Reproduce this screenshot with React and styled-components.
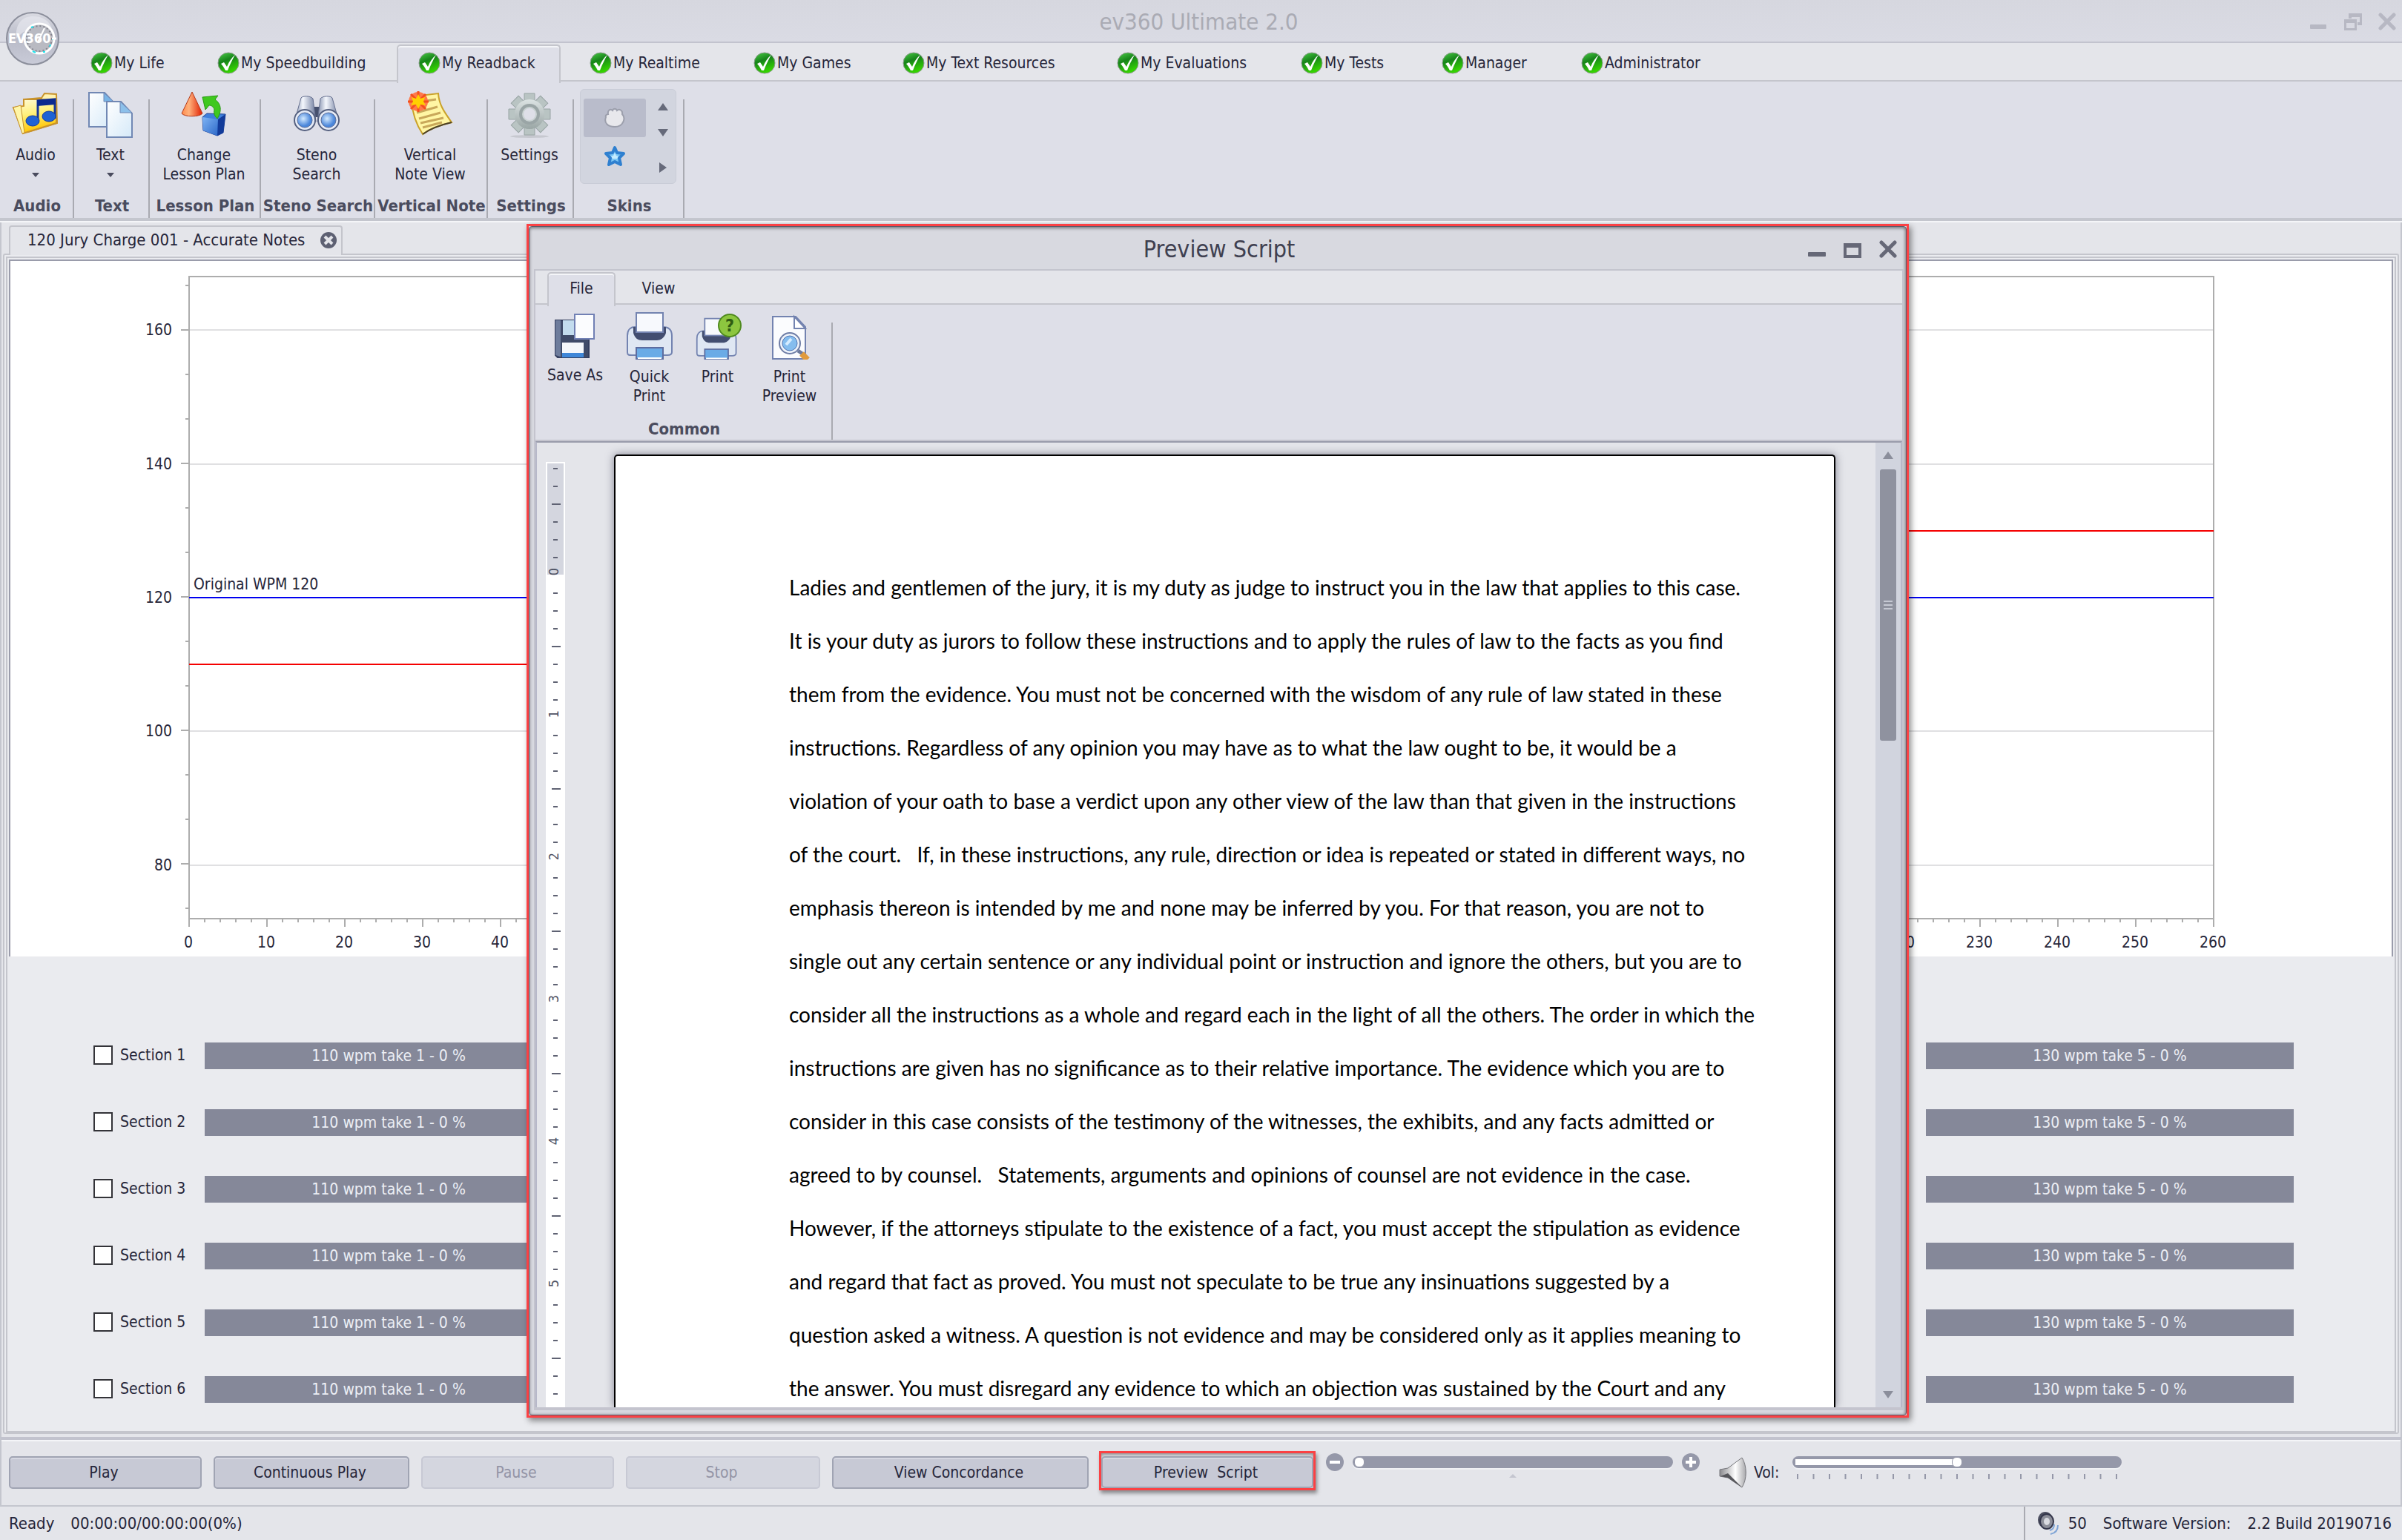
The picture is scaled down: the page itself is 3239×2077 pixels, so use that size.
import React, { useState } from "react";
import styled, { createGlobalStyle, css } from "styled-components";

const GlobalStyle = createGlobalStyle`
  * {
    box-sizing: border-box;
  }

  body {
    margin: 0;
    background: #e4e5ea;
    color: #26263a;
    font-family: 'DejaVu Sans Condensed', 'DejaVu Sans', sans-serif;
    font-size: 21px;
    line-height: 26px;
  }

  button, input {
    font: inherit;
    color: inherit;
    margin: 0;
  }

  svg {
    display: block;
    flex: none;
  }
`;

/* ---------- window shell ---------- */

const Window = styled.div`
  position: relative;
  display: flex;
  flex-direction: column;
  min-height: 100vh;
  overflow: hidden;
`;

const TitleBar = styled.header`
  position: relative;
  display: flex;
  align-items: center;
  justify-content: flex-end;
  height: 58px;
  padding: 2px 8px 0 0;
  background: linear-gradient(#d6d7df, #dadbe4);
  border-bottom: 2px solid #c2c3ce;
`;

const WindowTitle = styled.h1`
  flex: 1;
  margin: 0;
  padding-left: 118px;
  text-align: center;
  font-size: 31px;
  line-height: 40px;
  font-weight: normal;
  color: #aaabb4;
`;

const WindowButtons = styled.div`
  display: flex;
  gap: ${({ $gap }) => $gap || 24}px;
  color: ${({ $muted }) => ($muted ? "#b7b8c3" : "#666877")};
`;

const BareButton = styled.button`
  display: flex;
  padding: 0;
  border: 0;
  background: none;
`;

const Orb = styled.div`
  position: absolute;
  left: 6px;
  top: 14px;
  z-index: 2;
`;

/* ---------- ribbon ---------- */

const TabStrip = styled.nav`
  display: flex;
  gap: ${({ $gap }) => $gap}px;
  height: ${({ $height }) => $height}px;
  padding-left: ${({ $start }) => $start}px;
  background: #e4e5ea;
  border-bottom: 2px solid #c4c5cc;
  box-shadow: 0 2px 0 #f4f5f8;
`;

const RibbonTab = styled.button`
  display: flex;
  align-items: center;
  justify-content: ${({ $center }) => ($center ? "center" : "flex-start")};
  gap: 2px;
  width: ${({ $width }) => $width}px;
  margin: 2px 0 -4px;
  padding: ${({ $center }) => ($center ? "0 0 4px" : "0 0 4px 27px")};
  border: 2px solid transparent;
  border-bottom: 0;
  background: none;
  white-space: nowrap;

  ${({ $active }) => $active && css`
    position: relative;
    background: #dedfe8;
    border-color: #c4c5cc;
    border-radius: 5px 5px 0 0;
    box-shadow: inset 0 2px 0 #f4f5f8;
  `}
`;

const Ribbon = styled.div`
  display: flex;
  height: ${({ $height }) => $height}px;
  padding-top: 2px;
  background: #dedfe8;
`;

const Group = styled.section`
  display: flex;
  flex-direction: column;
  align-items: center;
  width: ${({ $width }) => $width}px;
  padding-top: ${({ $top }) => $top || 8}px;
  background: linear-gradient(#a9aab1, #a9aab1) right bottom / 2px calc(100% - 22px) no-repeat;
`;

const GroupTools = styled.div`
  display: flex;
  justify-content: center;
  flex: 1;
  align-self: stretch;
  padding-right: 4px;
`;

const GroupLabel = styled.h2`
  margin: 0;
  padding-bottom: 2px;
  font-size: 22px;
  line-height: 28px;
  font-weight: bold;
  color: #4a4c5e;
  white-space: nowrap;
`;

const Tool = styled.button`
  display: flex;
  flex-direction: column;
  align-items: center;
  justify-content: flex-start;
  gap: 10px;
  width: ${({ $width }) => ($width ? `${$width}px` : "auto")};
  padding: 0;
  border: 0;
  background: none;
  text-align: center;
  white-space: pre-line;
`;

const Caret = styled.span`
  width: 0;
  height: 0;
  margin-top: 1px;
  border: 5px solid transparent;
  border-top: 6px solid #4a4c5e;
  border-bottom: 0;
`;

const SkinBox = styled.div`
  display: grid;
  grid-template-columns: 84px 1fr;
  width: 130px;
  height: 128px;
  padding: 12px 4px 10px;
  background: #d2d5df;
  border: 1px solid #c9ccd7;
  border-radius: 6px;
`;

const SkinList = styled.div`
  display: flex;
  flex-direction: column;
`;

const SkinButton = styled.button`
  display: flex;
  align-items: center;
  justify-content: center;
  height: 52px;
  padding: 0;
  border: 0;
  border-radius: 3px;
  background: ${({ $active }) => ($active ? "#b9bccb" : "none")};
`;

const SkinArrows = styled.div`
  display: flex;
  flex-direction: column;
  align-items: center;
  gap: 25px;
  padding: 6px 0 4px 10px;

  span:last-child {
    margin-top: auto;
  }
`;

const Rule = styled.div`
  height: 6px;
  background: #c4c6ce;
  border-bottom: 2px solid #f4f5f8;
`;

/* ---------- document area ---------- */

const DocumentArea = styled.main`
  flex: 1;
  display: flex;
  flex-direction: column;
  padding: 4px 2px;
  border: 2px solid #c4c6ce;
  border-top: 0;
  border-bottom: 0;
`;

const DocumentTab = styled.div`
  position: relative;
  z-index: 1;
  display: flex;
  align-items: center;
  justify-content: space-between;
  align-self: flex-start;
  width: 450px;
  height: 40px;
  margin: 0 0 -2px 8px;
  padding: 0 6px 2px 23px;
  background: #e4e5ea;
  border: 2px solid #c4c5cc;
  border-bottom: 0;
  border-radius: 4px 4px 0 0;
  font-size: 22px;
  white-space: nowrap;
`;

const Panel = styled.div`
  flex: 1;
  padding: 2px 2px 0;
  background: #eaebef;
  border: 6px double #c4c5cc;
  border-bottom: 4px solid #c4c5cc;
  border-radius: 3px;
`;

const ChartBox = styled.div`
  background: #fff;
  border: 2px solid #9a9cab;
  border-bottom: 0;
`;

const ChartSvg = styled.svg`
  width: 100%;
  height: auto;

  text {
    font-size: 21px;
    fill: #26263a;
  }
`;

const Sections = styled.div`
  display: flex;
  flex-direction: column;
  gap: 54px;
  padding: 116px 134px 38px 114px;
`;

const SectionRow = styled.div`
  display: grid;
  grid-template-columns: 66px repeat(5, 1fr);
  column-gap: 84px;
  align-items: center;
  height: 36px;
`;

const SectionLabel = styled.label`
  display: flex;
  align-items: center;
  gap: 10px;
  height: 30px;
  margin-bottom: 2px;
  white-space: nowrap;
`;

const CheckBox = styled.input`
  appearance: none;
  flex: none;
  width: 26px;
  height: 26px;
  background: #fff;
  border: 2px solid #333338;
`;

const TakeBar = styled.div`
  height: 36px;
  padding-top: 1px;
  background: #858899;
  color: #eceef4;
  line-height: 34px;
  text-align: center;
`;

/* ---------- player bar ---------- */

const PlayerBar = styled.footer`
  display: flex;
  align-items: flex-start;
  height: 94px;
  padding: 20px 10px 0;
  border: 2px solid #c4c6ce;
  border-top: 4px solid #c2c3ce;
  box-shadow: inset 0 2px 0 #f4f5f8;
`;

const PlayerButton = styled.button`
  width: ${({ $width }) => $width}px;
  height: 44px;
  margin: 2px 16px 0 0;
  padding: 0 4px 0 0;
  background: #c7c9d5;
  border: 2px solid #a0a4b3;
  border-radius: 5px;
  box-shadow: inset 0 2px 0 #d6d8e2;
  white-space: pre;

  &:disabled {
    color: #9394a6;
    background: #d4d6df;
    border-color: #c7c9d4;
  }
`;

const RedOutline = styled.div`
  margin: -5px 14px 0 -2px;
  padding: 4px 0 0;
  height: 53px;
  border: 3px solid #fb4144;
  box-shadow: 2px 4px 5px rgba(0, 0, 0, 0.4), inset 0 2px 4px rgba(0, 0, 0, 0.4);

  ${PlayerButton} {
    display: block;
    height: 43px;
    margin: 0;
  }
`;

const SliderGroup = styled.div`
  display: flex;
  flex-direction: column;
  gap: 6px;
`;

const SliderRow = styled.div`
  display: flex;
  align-items: center;
  gap: 12px;
  height: 20px;
`;

const Slider = styled.input`
  appearance: none;
  width: ${({ $width }) => $width}px;
  height: 16px;
  padding: 0 2px;
  border-radius: 8px;
  background: ${({ $filled, value, max }) =>
    $filled
      ? `linear-gradient(#fff, #fff) 4px 4px / ${(value / max) * 96}% 8px no-repeat, #9598a9`
      : "#9598a9"};
  box-shadow: 0 2px 0 #f0f1f5;

  &::-webkit-slider-thumb {
    appearance: none;
    width: 14px;
    height: 14px;
    background: #fff;
    border: 1px solid #9598a9;
    border-radius: 6px;
  }
`;

const TempoMark = styled.span`
  align-self: center;
  width: 0;
  height: 0;
  border: 5px solid transparent;
  border-top: 0;
  border-bottom: 5px solid #c4c6d0;
`;

const VolumeLabel = styled.label`
  display: flex;
  align-items: center;
  gap: 9px;
  height: 44px;
  margin: 2px 18px 0 26px;
`;

const StatusBar = styled.div`
  display: flex;
  align-items: center;
  height: 45px;
  padding-left: 12px;
  gap: 22px;
  font-size: 22px;
  white-space: nowrap;
`;

const StatusInfo = styled.div`
  display: flex;
  align-items: center;
  gap: 22px;
  height: 45px;
  margin-left: auto;
  padding: 0 14px 0 16px;
  border-left: 2px solid #a9aab1;
`;

const Voice = styled.span`
  display: flex;
  align-items: center;
  gap: 12px;
`;

/* ---------- preview dialog ---------- */

const Dialog = styled.div`
  position: absolute;
  left: 710px;
  right: 665px;
  top: 302px;
  bottom: 165px;
  z-index: 5;
  display: flex;
  border: 3px solid #fb4144;
  background: #d8d9e0;
  box-shadow: 3px 4px 8px rgba(0, 0, 0, 0.45);
`;

const DialogFrame = styled.div`
  flex: 1;
  min-width: 0;
  display: flex;
  flex-direction: column;
  padding: 0 3px 6px 6px;
  border: 1px solid #5a5c6a;
  border-radius: 4px;
  box-shadow: inset 0 2px 4px rgba(0, 0, 0, 0.35), inset -1px 0 4px rgba(0, 0, 0, 0.25);
`;

const DialogTitle = styled.header`
  display: flex;
  align-items: center;
  height: 57px;
  padding: 2px 9px 0 0;
`;

const DialogHeading = styled.h2`
  flex: 1;
  margin: 0;
  padding-left: 130px;
  text-align: center;
  font-size: 32px;
  line-height: 40px;
  font-weight: normal;
  color: #3f4050;
`;

const DialogBody = styled.div`
  flex: 1;
  min-height: 0;
  display: flex;
  flex-direction: column;
  border: 2px solid #c4c4ce;
  border-bottom-width: 4px;
`;

const Editor = styled.div`
  flex: 1;
  min-height: 0;
  display: flex;
  overflow: hidden;
  background: #e4e5ea;
  border: 2px solid #b7b8c9;
  border-top: 2px solid #9a9cab;
  border-bottom: 0;
  padding-left: 12px;
  box-shadow: 0 -2px 0 #c4c4ce;
`;

const RulerBox = styled.div`
  flex: none;
  width: 26px;
  margin-top: 26px;
  background: #fff;

  svg {
    overflow: visible;
  }

  text {
    font-size: 18px;
    fill: #4f5264;
  }
`;

const Page = styled.article`
  flex: 1;
  min-width: 0;
  margin: 16px 54px 0 66px;
  padding: 141px 0 0 234px;
  background: #fff;
  border: 2px solid #000;
  border-bottom: 0;
  border-radius: 5px 5px 0 0;
  box-shadow: 0 0 12px rgba(60, 60, 80, 0.6);
  color: #000;
  font-family: Lato, sans-serif;
  font-size: 28px;
  line-height: 72px;
`;

const Line = styled.p`
  margin: 0;
  white-space: pre;
`;

const ScrollTrack = styled.div`
  flex: none;
  display: flex;
  flex-direction: column;
  align-items: center;
  width: 34px;
  padding: 12px 0;
  background: #d1d4de;
`;

const ScrollThumb = styled.div`
  display: flex;
  flex-direction: column;
  justify-content: center;
  align-items: center;
  gap: 3px;
  width: 22px;
  height: 366px;
  margin: 14px 0 auto;
  border-radius: 3px;
  background: #8f929f;
`;

const Grip = styled.span`
  width: 12px;
  height: 2px;
  background: #c5c8d3;
`;

const Arrow = styled.span`
  width: 0;
  height: 0;
  color: ${({ $soft }) => ($soft ? "#8b8e9b" : "#666a7a")};
  border: 7px solid transparent;
  ${({ $dir }) => $dir === "up" && "border-top: 0; border-bottom: 10px solid;"}
  ${({ $dir }) => $dir === "down" && "border-bottom: 0; border-top: 10px solid;"}
  ${({ $dir }) => $dir === "right" && "border-right: 0; border-left: 10px solid;"}
`;

/* ---------- icons ---------- */

const LogoIcon = () => (
  <svg width="76" height="76" viewBox="0 0 76 76">
    <defs>
      <linearGradient id="orb" x1="0" y1="0" x2="0" y2="1">
        <stop offset="0" stopColor="#d9dae2" />
        <stop offset="0.5" stopColor="#b9bbc8" />
        <stop offset="1" stopColor="#c9cbd8" />
      </linearGradient>
    </defs>
    <circle cx="38" cy="38" r="35" fill="url(#orb)" stroke="#8b8e9b" strokeWidth="2" />
    <path d="M16 38 C14 16 26 8 38 8 C52 8 60 14 64 24 C50 18 30 22 16 38Z" fill="#e6e7ee" opacity="0.7" />
    <circle cx="47" cy="38" r="20" fill="#b9bac2" stroke="#fff" strokeWidth="3" />
    <circle cx="47" cy="38" r="17" fill="none" stroke="#85868f" strokeWidth="2" strokeDasharray="2 3" />
    <path d="M36 23l3-1M65 37v3M62 46l-1 3M38 55l4 2M52 56h3" stroke="#1fe3ee" strokeWidth="2" />
    <path d="M45 43 L54 24" stroke="#fff" strokeWidth="2" />
    <text x="5" y="44" fontSize="18" fontWeight="bold" fill="#fff">EV360</text>
    <path d="M64 38h6" stroke="#fff" strokeWidth="3" />
  </svg>
);

const CheckIcon = () => (
  <svg width="30" height="32" viewBox="0 0 30 32">
    <defs>
      <linearGradient id="tick" x1="0" y1="0" x2="0.4" y2="1">
        <stop offset="0" stopColor="#4cd048" />
        <stop offset="0.45" stopColor="#17841a" />
        <stop offset="1" stopColor="#35d400" />
      </linearGradient>
    </defs>
    <circle cx="15" cy="16" r="14" fill="url(#tick)" stroke="#8a9a8a" strokeWidth="1" />
    <path d="M5 17 L9 15 L13 21 C16 14 19 9 24 5 C20 12 17 18 14 26 L11 26 C9 22 7 19 5 17Z" fill="#fff" />
  </svg>
);

const AudioIcon = () => (
  <svg width="64" height="64" viewBox="0 0 64 64">
    <defs>
      <linearGradient id="folder" x1="0" y1="0" x2="0.3" y2="1">
        <stop offset="0" stopColor="#fffbe0" />
        <stop offset="0.5" stopColor="#fff07a" />
        <stop offset="1" stopColor="#ffc400" />
      </linearGradient>
    </defs>
    <path d="M16 12 L40 10 L44 4 L60 5 L61 44 L22 56Z" fill="#fff3b0" stroke="#c8932c" strokeWidth="2" />
    <path d="M2 23 L16 21 V12 L40 12 L60 14 L60 44 L15 58Z" fill="url(#folder)" stroke="#c8932c" strokeWidth="2" />
    <path d="M2 23 L12 20 L17 57 L14 58Z" fill="#fff6a8" stroke="#c8932c" strokeWidth="1" />
    <path d="M35 44 V14 L58 12 V38" fill="none" stroke="#15379c" strokeWidth="3" />
    <path d="M34 13 L59 11 V19 L34 21Z" fill="#0b2a8f" />
    <ellipse cx="28" cy="41" rx="9" ry="7" fill="#1f62d4" stroke="#123a9e" strokeWidth="1" />
    <ellipse cx="50" cy="35" rx="9" ry="7" fill="#1f62d4" stroke="#123a9e" strokeWidth="1" />
  </svg>
);

const TextIcon = () => (
  <svg width="64" height="64" viewBox="0 0 64 64">
    <defs>
      <linearGradient id="sheet" x1="0" y1="0" x2="1" y2="1">
        <stop offset="0" stopColor="#fff" />
        <stop offset="1" stopColor="#d5e9f8" />
      </linearGradient>
    </defs>
    <path d="M3 3 H24 L36 16 V49 H3Z" fill="url(#sheet)" stroke="#7188b4" strokeWidth="2" />
    <path d="M23 3 V15 H36Z" fill="#79b4e6" stroke="#7188b4" strokeWidth="1" />
    <path d="M27 15 H46 L61 31 V63 H27Z" fill="url(#sheet)" stroke="#7188b4" strokeWidth="2" />
    <path d="M45 15 V30 H61Z" fill="#8cc0ea" stroke="#7188b4" strokeWidth="1" />
  </svg>
);

const ChangeIcon = () => (
  <svg width="64" height="64" viewBox="0 0 64 64">
    <defs>
      <linearGradient id="cone">
        <stop offset="0" stopColor="#ff8a4a" />
        <stop offset="0.35" stopColor="#ffb27c" />
        <stop offset="1" stopColor="#e01c00" />
      </linearGradient>
      <linearGradient id="cubeface" x1="0" y1="0" x2="1" y2="1">
        <stop offset="0" stopColor="#7fb4f4" />
        <stop offset="1" stopColor="#2c68c8" />
      </linearGradient>
    </defs>
    <path d="M16 2 L30 31 C26 36 6 36 2 31Z" fill="url(#cone)" stroke="#b33a1c" strokeWidth="1" />
    <path d="M30 36 L36 31 L61 32 L58 57 L50 61 L31 54Z" fill="#3f7fdc" stroke="#1c3f93" strokeWidth="1" />
    <path d="M30 36 L51 39 L50 61 L31 54Z" fill="url(#cubeface)" />
    <path d="M51 39 L61 32 L58 57 L50 61Z" fill="#123b9a" />
    <path d="M30 9 L51 7 L47 12 C56 19 56 28 50 38 C46 34 45 31 46 26 C45 22 42 20 39 20 L34 26Z" fill="#3fc81f" stroke="#279a12" strokeWidth="1" />
  </svg>
);

const BinocularsIcon = () => (
  <svg width="64" height="64" viewBox="0 0 64 64">
    <defs>
      <linearGradient id="barrel">
        <stop offset="0" stopColor="#7c89a8" />
        <stop offset="0.4" stopColor="#f4f7fd" />
        <stop offset="1" stopColor="#6d7a9c" />
      </linearGradient>
      <radialGradient id="lens" cx="0.4" cy="0.4">
        <stop offset="0" stopColor="#d3eaff" />
        <stop offset="1" stopColor="#4a86da" />
      </radialGradient>
    </defs>
    <rect x="26" y="22" width="12" height="14" fill="#46506e" />
    <path d="M11 10 C13 7 24 7 27 11 L31 42 H2Z" fill="url(#barrel)" stroke="#66708f" strokeWidth="1" />
    <path d="M53 10 C51 7 40 7 37 11 L33 42 H62Z" fill="url(#barrel)" stroke="#66708f" strokeWidth="1" />
    <circle cx="16" cy="40" r="14" fill="#e6ecf7" stroke="#55607f" strokeWidth="2" />
    <circle cx="48" cy="40" r="14" fill="#e6ecf7" stroke="#55607f" strokeWidth="2" />
    <circle cx="16" cy="40" r="10" fill="url(#lens)" stroke="#5a6c98" strokeWidth="1" />
    <circle cx="48" cy="40" r="10" fill="url(#lens)" stroke="#5a6c98" strokeWidth="1" />
  </svg>
);

const NoteIcon = () => (
  <svg width="64" height="64" viewBox="0 0 64 64">
    <path d="M10 8 L43 4 C44 20 52 30 61 43 C48 46 34 50 22 59 C12 44 8 30 7 14Z" fill="#fff6a4" stroke="#caa22a" strokeWidth="2" />
    <path d="M61 43 C48 46 34 50 22 59" fill="none" stroke="#4b4028" strokeWidth="2" />
    <path d="M20 15 L40 12 M14 30 L42 22 M17 38 L46 30 M19 44 L50 37 M22 50 L48 43" stroke="#c9a85a" strokeWidth="3" />
    <circle cx="16" cy="15" r="13" fill="#ff7a4a" />
    <path d="M16 1v28M2 15h28M6 5l20 20M26 5L6 25" stroke="#f4501e" strokeWidth="3" />
    <path d="M16 5l3 6 6-2-2 6 3 5-7-1-3 6-3-6-7 1 3-5-2-6 6 2Z" fill="#ffd000" />
  </svg>
);

const GearIcon = () => (
  <svg width="64" height="64" viewBox="0 0 64 64">
    <defs>
      <linearGradient id="gear" x1="0" y1="0" x2="0" y2="1">
        <stop offset="0" stopColor="#dce3e3" />
        <stop offset="1" stopColor="#9aa6a5" />
      </linearGradient>
    </defs>
    <ellipse cx="32" cy="62" rx="26" ry="2" fill="#c6c8cf" />
    <g fill="#b9c4c3" stroke="#98a4a4" strokeWidth="1">
      {[0, 45, 90, 135, 180, 225, 270, 315].map((angle) => (
        <path key={angle} d="M25 16 V4 H39 V16Z" transform={`rotate(${angle} 32 32)`} />
      ))}
    </g>
    <circle cx="32" cy="32" r="20" fill="url(#gear)" />
    <circle cx="32" cy="32" r="14" fill="#9aa5a6" />
    <circle cx="32" cy="32" r="9" fill="#dedfe8" stroke="#c9d2d2" strokeWidth="2" />
  </svg>
);

const BlobIcon = () => (
  <svg width="30" height="30" viewBox="0 0 30 30">
    <path d="M6 10 C5 5 9 2 12 5 C13 2 17 2 18 5 C21 2 26 5 25 10 C30 15 27 27 15 27 C6 27 0 22 3 14 C2 12 4 10 6 10Z" fill="#e8e8ec" stroke="#9c9fac" strokeWidth="2" />
  </svg>
);

const StarIcon = () => (
  <svg width="30" height="30" viewBox="0 0 30 30">
    <path d="M15 3 L18 10 L27 11 L21 17 L23 26 L15 22 L7 26 L9 17 L3 11 L12 10Z" fill="#7cc6f5" stroke="#2f80d0" strokeWidth="4" strokeLinejoin="round" />
    <path d="M15 10 L17 14 L20 15 L18 18 L15 18 L12 18 L10 15 L13 14Z" fill="#c4ecff" />
  </svg>
);

const SaveIcon = () => (
  <svg width="64" height="64" viewBox="0 0 64 64">
    <path d="M5 13 H50 V64 H9 L5 60Z" fill="#3f4b69" stroke="#333e5e" strokeWidth="2" />
    <path d="M5 13 H12 V62 L5 60Z" fill="#6d7c9c" />
    <rect x="15" y="13" width="20" height="20" fill="#c3dcee" />
    <rect x="14" y="43" width="29" height="14" fill="#f4f7fb" />
    <rect x="14" y="57" width="29" height="6" fill="#3f87d8" />
    <rect x="31" y="5" width="26" height="33" fill="#fbfcfe" stroke="#7180b4" strokeWidth="2" />
  </svg>
);

const PrinterBody = () => (
  <>
    <path d="M2 34 C2 24 8 22 12 22 H50 C56 22 62 24 62 34 V56 C62 60 58 60 56 60 H8 C4 60 2 60 2 56Z" fill="#dfe7f3" stroke="#7383b0" strokeWidth="2" />
    <path d="M10 22 H54 V30 C52 37 46 40 42 40 H22 C16 40 12 37 10 30Z" fill="#434e70" />
    <rect x="14" y="3" width="36" height="26" fill="#f7f9fd" stroke="#7383b0" strokeWidth="2" />
    <rect x="14" y="50" width="36" height="15" fill="#6aabe6" stroke="#5d6da0" strokeWidth="2" />
    <path d="M16 64 H48" stroke="#fff" strokeWidth="2" />
  </>
);

const QuickPrintIcon = () => (
  <svg width="64" height="66" viewBox="0 0 64 66">
    <PrinterBody />
  </svg>
);

const PrintIcon = () => (
  <svg width="64" height="66" viewBox="0 0 64 66">
    <g transform="translate(2 8) scale(0.88)">
      <PrinterBody />
    </g>
    <circle cx="48" cy="20" r="15" fill="#8cc63f" stroke="#4f8a1e" strokeWidth="2" />
    <text x="48" y="28" fontSize="23" fontWeight="bold" textAnchor="middle" fill="#2f5c12">?</text>
  </svg>
);

const PreviewIcon = () => (
  <svg width="64" height="66" viewBox="0 0 64 66">
    <path d="M9 8 H40 L53 22 V65 H9Z" fill="#fbfcfe" stroke="#7383b0" strokeWidth="2" />
    <path d="M38 8 V24 H53Z" fill="#fff" stroke="#7383b0" strokeWidth="2" />
    <path d="M43 54 L49 58" stroke="#6d7a9c" strokeWidth="5" />
    <path d="M48 58 L56 66" stroke="#e09a3c" strokeWidth="8" />
    <circle cx="32" cy="44" r="14" fill="#eef3fa" stroke="#6e7da6" strokeWidth="2" />
    <circle cx="32" cy="44" r="10" fill="#85bdee" stroke="#4f74b4" strokeWidth="1" />
    <path d="M27 46 L34 38" stroke="#d5ecff" strokeWidth="4" />
  </svg>
);

const CloseCircleIcon = () => (
  <svg width="22" height="22" viewBox="0 0 22 22">
    <circle cx="11" cy="11" r="11" fill="#5d6072" />
    <path d="M6 6 L16 16 M16 6 L6 16" stroke="#e4e5ea" strokeWidth="4" />
  </svg>
);

const RoundIcon = ({ plus }) => (
  <svg width="24" height="24" viewBox="0 0 24 24">
    <circle cx="12" cy="12" r="12" fill="#9598a9" />
    <path d={plus ? "M5 12 H19 M12 5 V19" : "M5 12 H19"} stroke="#fff" strokeWidth="4" />
  </svg>
);

const SpeakerIcon = () => (
  <svg width="38" height="42" viewBox="0 0 38 42">
    <defs>
      <linearGradient id="horn">
        <stop offset="0" stopColor="#8a8a8e" />
        <stop offset="0.6" stopColor="#fff" />
        <stop offset="1" stopColor="#a8a8ac" />
      </linearGradient>
    </defs>
    <path d="M1 17 L12 15 L31 1 C38 12 38 30 31 41 L12 28 L1 26Z" fill="url(#horn)" stroke="#77777c" strokeWidth="1" />
    <path d="M2 26 L12 28 L31 41 L12 22Z" fill="#55555a" />
  </svg>
);

const VoiceIcon = () => (
  <svg width="30" height="32" viewBox="0 0 30 32">
    <ellipse cx="11" cy="11" rx="10" ry="11" fill="#4c4f60" />
    <ellipse cx="13" cy="13" rx="9" ry="10" fill="#8b8d98" stroke="#33354a" strokeWidth="2" />
    <ellipse cx="13" cy="13" rx="4" ry="5" fill="#d9dae0" />
    <path d="M17 25 C21 24 23 21 23 17 M18 30 C24 29 28 25 28 18" fill="none" stroke="#7fa4d6" strokeWidth="2" />
  </svg>
);

const MinimizeIcon = ({ small }) => (
  <svg width="24" height="24" viewBox="0 0 24 24">
    <rect x="0" y="16" width={small ? 22 : 24} height="6" rx="1" fill="currentColor" />
  </svg>
);

const MaximizeIcon = () => (
  <svg width="24" height="24" viewBox="0 0 24 24">
    <path d="M0 4 H24 V24 H0Z M4 10 V20 H20 V10Z" fill="currentColor" fillRule="evenodd" />
  </svg>
);

const RestoreIcon = () => (
  <svg width="24" height="24" viewBox="0 0 24 24">
    <path d="M6 1 H24 V17 H18 V13 H21 V6 H10 V8 H6Z M0 9 H17 V24 H0Z M3 14 V21 H14 V14Z" fill="currentColor" fillRule="evenodd" />
  </svg>
);

const CloseIcon = () => (
  <svg width="24" height="24" viewBox="0 0 24 24">
    <path d="M3 3 L21 21 M21 3 L3 21" stroke="currentColor" strokeWidth="5" strokeLinecap="round" />
  </svg>
);

/* ---------- data ---------- */

const tabs = [
  { name: "My Life", width: 161 },
  { name: "My Speedbuilding", width: 261 },
  { name: "My Readback", width: 221 },
  { name: "My Realtime", width: 211 },
  { name: "My Games", width: 191 },
  { name: "My Text Resources", width: 279 },
  { name: "My Evaluations", width: 238 },
  { name: "My Tests", width: 180 },
  { name: "Manager", width: 178 },
  { name: "Administrator", width: 210 },
];

const groups = [
  { label: "Audio", tool: "Audio", icon: <AudioIcon />, width: 100, menu: true },
  { label: "Text", tool: "Text", icon: <TextIcon />, width: 102, menu: true },
  { label: "Lesson Plan", tool: "Change\nLesson Plan", icon: <ChangeIcon />, width: 150 },
  { label: "Steno Search", tool: "Steno\nSearch", icon: <BinocularsIcon />, width: 154 },
  { label: "Vertical Note", tool: "Vertical\nNote View", icon: <NoteIcon />, width: 152 },
  { label: "Settings", tool: "Settings", icon: <GearIcon />, width: 116 },
];

const previewTools = [
  { name: "Save As", icon: <SaveIcon />, width: 104 },
  { name: "Quick\nPrint", icon: <QuickPrintIcon />, width: 96 },
  { name: "Print", icon: <PrintIcon />, width: 88 },
  { name: "Print\nPreview", icon: <PreviewIcon />, width: 106 },
];

const sections = [1, 2, 3, 4, 5, 6];

const takes = [
  { id: 1, label: "110 wpm take 1 - 0 %" },
  { id: 2, label: "" },
  { id: 3, label: "" },
  { id: 4, label: "" },
  { id: 5, label: "130 wpm take 5 - 0 %" },
];

const script = [
  "Ladies and gentlemen of the jury, it is my duty as judge to instruct you in the law that applies to this case.",
  "It is your duty as jurors to follow these instructions and to apply the rules of law to the facts as you find",
  "them from the evidence. You must not be concerned with the wisdom of any rule of law stated in these",
  "instructions. Regardless of any opinion you may have as to what the law ought to be, it would be a",
  "violation of your oath to base a verdict upon any other view of the law than that given in the instructions",
  "of the court.   If, in these instructions, any rule, direction or idea is repeated or stated in different ways, no",
  "emphasis thereon is intended by me and none may be inferred by you. For that reason, you are not to",
  "single out any certain sentence or any individual point or instruction and ignore the others, but you are to",
  "consider all the instructions as a whole and regard each in the light of all the others. The order in which the",
  "instructions are given has no significance as to their relative importance. The evidence which you are to",
  "consider in this case consists of the testimony of the witnesses, the exhibits, and any facts admitted or",
  "agreed to by counsel.   Statements, arguments and opinions of counsel are not evidence in the case.",
  "However, if the attorneys stipulate to the existence of a fact, you must accept the stipulation as evidence",
  "and regard that fact as proved. You must not speculate to be true any insinuations suggested by a",
  "question asked a witness. A question is not evidence and may be considered only as it applies meaning to",
  "the answer. You must disregard any evidence to which an objection was sustained by the Court and any",
];

/* ---------- parts ---------- */

const range = (count) => Array.from({ length: count }, (_, i) => i);

const Chart = () => {
  const left = 241;
  const right = 2971;
  const top = 21;
  const bottom = 887;
  const x = (seconds) => left + seconds * 10.5;
  const y = (wpm) => Math.round(454 + (120 - wpm) * 9.02);

  return (
    <ChartSvg viewBox="0 0 3211 938">
      {[160, 140, 100, 80].map((wpm) => (
        <path key={wpm} d={`M${left} ${y(wpm)} H${right}`} stroke="#e0e0e2" strokeWidth="2" />
      ))}
      <g stroke="#adadad" strokeWidth="2" fill="none">
        <path d={`M${left} ${top} H${right} V${bottom} H${left}Z`} />
        {range(15).map((i) => (
          <path key={i} d={`M${i % 3 === 1 ? left - 11 : left - 5} ${33 + i * 60} H${left}`} />
        ))}
        {range(131).map((i) => (
          <path key={i} d={`M${x(i * 2)} ${bottom} v${i % 5 === 0 ? 11 : 5}`} />
        ))}
      </g>
      <path d={`M${left} ${y(120)} H${right}`} stroke="#0000f0" strokeWidth="2" />
      <path d={`M${left} ${y(110)} H${x(104)}`} stroke="#f50000" strokeWidth="2" />
      <path d={`M${x(156)} ${y(130)} H${right}`} stroke="#f50000" strokeWidth="2" />
      <text x={left + 6} y="443">Original WPM 120</text>
      {[160, 140, 120, 100, 80].map((wpm) => (
        <text key={wpm} x="218" y={y(wpm) + 7} textAnchor="end">{wpm}</text>
      ))}
      {range(27).map((i) => (
        <text key={i} x={x(i * 10) - 1} y="926" textAnchor="middle">{i * 10}</text>
      ))}
    </ChartSvg>
  );
};

const Ruler = () => (
  <RulerBox>
    <svg width="26" height="1274" viewBox="0 0 26 1274">
      <rect x="2" y="2" width="22" height="150" fill="#d4d6df" />
      {range(53).map((i) => {
        const step = i - 6;
        if (step % 8 === 0) {
          return (
            <text key={i} x="0" y="0" textAnchor="middle" transform={`translate(17 ${148 + step * 24}) rotate(-90)`}>
              {step / 8}
            </text>
          );
        }
        const half = Math.abs(step) % 4 === 0;
        return (
          <path key={i} d={half ? `M8 ${153 + step * 24} h12` : `M10 ${153 + step * 24} h6`} stroke="#5f6273" strokeWidth="2" />
        );
      })}
    </svg>
  </RulerBox>
);

const PreviewDialog = () => (
  <Dialog role="dialog" aria-label="Preview Script">
    <DialogFrame>
      <DialogTitle>
        <DialogHeading>Preview Script</DialogHeading>
        <WindowButtons>
          <BareButton aria-label="Minimize"><MinimizeIcon /></BareButton>
          <BareButton aria-label="Maximize"><MaximizeIcon /></BareButton>
          <BareButton aria-label="Close"><CloseIcon /></BareButton>
        </WindowButtons>
      </DialogTitle>
      <DialogBody>
        <TabStrip $gap={12} $height={46} $start={16}>
          <RibbonTab $active $center $width={92}>File</RibbonTab>
          <RibbonTab $center $width={92}>View</RibbonTab>
        </TabStrip>
        <Ribbon $height={184}>
          <Group $width={401} $top={6}>
            <GroupTools>
              {previewTools.map((tool) => (
                <Tool key={tool.name} $width={tool.width}>
                  {tool.icon}
                  {tool.name}
                </Tool>
              ))}
            </GroupTools>
            <GroupLabel>Common</GroupLabel>
          </Group>
        </Ribbon>
        <Editor>
          <Ruler />
          <Page>
            {script.map((line) => (
              <Line key={line}>{line}</Line>
            ))}
          </Page>
          <ScrollTrack>
            <Arrow $dir="up" $soft />
            <ScrollThumb>
              <Grip />
              <Grip />
              <Grip />
            </ScrollThumb>
            <Arrow $dir="down" $soft />
          </ScrollTrack>
        </Editor>
      </DialogBody>
    </DialogFrame>
  </Dialog>
);

const App = () => {
  const [activeTab, setActiveTab] = useState("My Readback");
  const [tempo, setTempo] = useState(0);
  const [volume, setVolume] = useState(50);

  return (
    <Window>
      <GlobalStyle />
      <TitleBar>
        <WindowTitle>ev360 Ultimate 2.0</WindowTitle>
        <WindowButtons $muted $gap={22}>
          <BareButton aria-label="Minimize"><MinimizeIcon small /></BareButton>
          <BareButton aria-label="Restore"><RestoreIcon /></BareButton>
          <BareButton aria-label="Close"><CloseIcon /></BareButton>
        </WindowButtons>
        <Orb><LogoIcon /></Orb>
      </TitleBar>

      <TabStrip $gap={10} $height={52} $start={93}>
        {tabs.map((tab) => (
          <RibbonTab
            key={tab.name}
            $width={tab.width}
            $active={tab.name === activeTab}
            onClick={() => setActiveTab(tab.name)}
          >
            <CheckIcon />
            {tab.name}
          </RibbonTab>
        ))}
      </TabStrip>

      <Ribbon $height={184}>
        {groups.map((group) => (
          <Group key={group.label} $width={group.width} $top={10}>
            <GroupTools>
              <Tool>
                {group.icon}
                {group.tool}
                {group.menu && <Caret />}
              </Tool>
            </GroupTools>
            <GroupLabel>{group.label}</GroupLabel>
          </Group>
        ))}
        <Group $width={149}>
          <GroupTools>
            <SkinBox>
              <SkinList>
                <SkinButton $active aria-label="Silver skin"><BlobIcon /></SkinButton>
                <SkinButton aria-label="Star skin"><StarIcon /></SkinButton>
              </SkinList>
              <SkinArrows>
                <Arrow $dir="up" />
                <Arrow $dir="down" />
                <Arrow $dir="right" />
              </SkinArrows>
            </SkinBox>
          </GroupTools>
          <GroupLabel>Skins</GroupLabel>
        </Group>
      </Ribbon>
      <Rule />

      <DocumentArea>
        <DocumentTab>
          120 Jury Charge 001 - Accurate Notes
          <BareButton aria-label="Close document"><CloseCircleIcon /></BareButton>
        </DocumentTab>
        <Panel>
          <ChartBox>
            <Chart />
          </ChartBox>
          <Sections>
            {sections.map((section) => (
              <SectionRow key={section}>
                <SectionLabel>
                  <CheckBox type="checkbox" />
                  Section {section}
                </SectionLabel>
                {takes.map((take) => (
                  <TakeBar key={take.id}>{take.label}</TakeBar>
                ))}
              </SectionRow>
            ))}
          </Sections>
        </Panel>
      </DocumentArea>

      <PlayerBar>
        <PlayerButton $width={260}>Play</PlayerButton>
        <PlayerButton $width={264}>Continuous Play</PlayerButton>
        <PlayerButton $width={260} disabled>Pause</PlayerButton>
        <PlayerButton $width={262} disabled>Stop</PlayerButton>
        <PlayerButton $width={346}>View Concordance</PlayerButton>
        <RedOutline>
          <PlayerButton $width={286}>{"Preview  Script"}</PlayerButton>
        </RedOutline>
        <SliderGroup>
          <SliderRow>
            <BareButton aria-label="Slower"><RoundIcon /></BareButton>
            <Slider
              type="range"
              aria-label="Tempo"
              $width={432}
              min={0}
              max={100}
              value={tempo}
              onChange={(e) => setTempo(Number(e.target.value))}
            />
            <BareButton aria-label="Faster"><RoundIcon plus /></BareButton>
          </SliderRow>
          <TempoMark />
        </SliderGroup>
        <VolumeLabel htmlFor="volume">
          <SpeakerIcon />
          Vol:
        </VolumeLabel>
        <SliderGroup>
          <SliderRow>
            <Slider
              id="volume"
              type="range"
              $filled
              $width={444}
              min={0}
              max={100}
              value={volume}
              onChange={(e) => setVolume(Number(e.target.value))}
            />
          </SliderRow>
          <svg width="444" height="7" viewBox="0 0 444 7">
            {range(21).map((i) => (
              <path key={i} d={`M${7 + i * 21.5} 0 v7`} stroke="#9598a9" strokeWidth="2" />
            ))}
          </svg>
        </SliderGroup>
      </PlayerBar>

      <StatusBar>
        <span>Ready</span>
        <span>00:00:00/00:00:00(0%)</span>
        <StatusInfo>
          <Voice>
            <VoiceIcon />
            50
          </Voice>
          <span>Software Version:</span>
          <span>2.2 Build 20190716</span>
        </StatusInfo>
      </StatusBar>

      <PreviewDialog />
    </Window>
  );
};

export default App;
